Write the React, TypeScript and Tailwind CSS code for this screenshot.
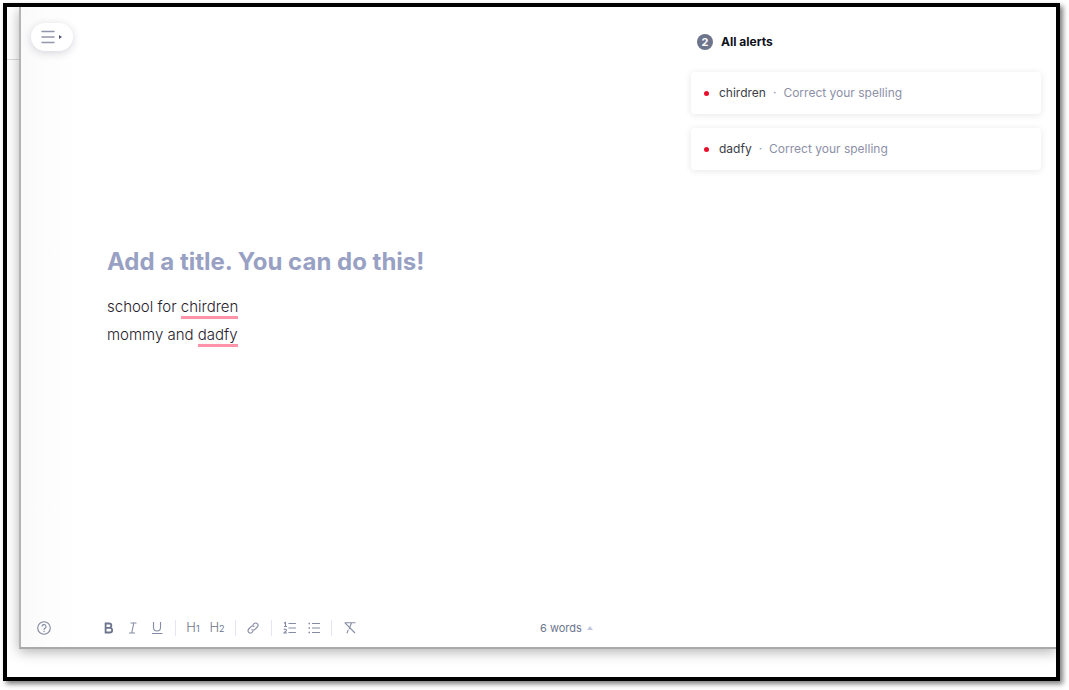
import type { ReactNode } from "react";

const alerts = [
    { word: "chirdren", hint: "Correct your spelling" },
    { word: "dadfy", hint: "Correct your spelling" },
];

function ToolButton({ label, children }: { label: string; children: ReactNode }) {
    return (
        <button
            type="button"
            aria-label={label}
            className="flex h-6 w-6 items-center justify-center text-[#6d758d]"
        >
            {children}
        </button>
    );
}

function Separator() {
    return (
        <div className="flex w-3 justify-center">
            <div className="h-4 w-px bg-[#e4e6f4]" />
        </div>
    );
}

function Icon({ children }: { children: ReactNode }) {
    return (
        <svg
            width="16"
            height="16"
            viewBox="0 0 16 16"
            fill="none"
            stroke="#858ca5"
            strokeWidth="1.1"
            aria-hidden="true"
        >
            {children}
        </svg>
    );
}

function Misspelled({ children }: { children: ReactNode }) {
    return (
        <span className="inline-block h-6 border-b-3 border-[#ff94a8] leading-6">{children}</span>
    );
}

function Toolbar() {
    return (
        <div role="toolbar" aria-label="Formatting" className="flex items-center">
            <ToolButton label="Bold">
                <svg width="16" height="16" viewBox="0 0 16 16" fill="none" stroke="#6d758d" strokeWidth="1.8" aria-hidden="true">
                    <path d="M4.6 3.5h3.6a2.1 2.1 0 0 1 0 4.3H4.6zM4.6 7.8h4.2a2.35 2.35 0 0 1 0 4.7H4.6z" />
                </svg>
            </ToolButton>
            <ToolButton label="Italic">
                <Icon>
                    <path d="M5.5 3h6M4 13h6M8.8 3 6.7 13" />
                </Icon>
            </ToolButton>
            <ToolButton label="Underline">
                <Icon>
                    <path d="M4.5 2v5.5a3.5 3.5 0 0 0 7 0V2M3 13.5h10.5" />
                </Icon>
            </ToolButton>
            <Separator />
            <ToolButton label="Heading 1">
                <span className="text-[13px] font-light text-[#6d758d]">H</span>
                <span className="pt-0.5 text-[9px] text-[#6d758d]">1</span>
            </ToolButton>
            <ToolButton label="Heading 2">
                <span className="text-[13px] font-light text-[#6d758d]">H</span>
                <span className="pt-0.5 text-[9px] text-[#6d758d]">2</span>
            </ToolButton>
            <Separator />
            <ToolButton label="Link">
                <Icon>
                    <path d="M6.6 9.4a2.3 2.3 0 0 0 3.3 0l2.4-2.4a2.33 2.33 0 0 0-3.3-3.3L7.8 4.9" />
                    <path d="M9.4 6.6a2.3 2.3 0 0 0-3.3 0L3.7 9a2.33 2.33 0 0 0 3.3 3.3l1.2-1.2" />
                </Icon>
            </ToolButton>
            <Separator />
            <ToolButton label="Numbered list">
                <Icon>
                    <path d="M7.5 3.5H15M7.5 8H15M7.5 12.5H15" />
                    <path d="M3 3.3 4.5 2.5v4M3 6.5h3M3 9.8c.5-1 2.5-.8 2.4.4 0 .9-1.5 1.6-2.4 2.8h3" />
                </Icon>
            </ToolButton>
            <ToolButton label="Bulleted list">
                <Icon>
                    <path d="M7 3.5h8M7 8h8M7 12.5h8" />
                    <path d="M3.5 3.5H5M3.5 8H5M3.5 12.5H5" strokeWidth="1.5" />
                </Icon>
            </ToolButton>
            <Separator />
            <ToolButton label="Clear formatting">
                <Icon>
                    <path d="M3.5 2.8h11M10.5 2.8 8.200 9M7.3 9.6 6 13.2M4.200 3.2l9.8 9.8" />
                </Icon>
            </ToolButton>
        </div>
    );
}

function AlertsPanel() {
    return (
        <aside className="mr-[15px] w-[350px] shrink-0 pt-6">
            <h2 className="flex h-[22px] items-center gap-2 pl-1.5 text-xs font-bold text-[#0e101a]">
                <span className="flex h-4 w-4 items-center justify-center rounded-full bg-[#6d758d] text-[11px] text-white">
                    2
                </span>
                All alerts
            </h2>
            <ul className="mt-[19px] flex flex-col gap-3.5">
                {alerts.map((alert) => (
                    <li key={alert.word}>
                        <button
                            type="button"
                            className="flex h-[42px] w-full items-center rounded bg-white pl-[13px] text-xs shadow-[0_1px_7px_rgba(30,35,60,0.11)]"
                        >
                            <span className="h-[5px] w-[5px] rounded-full bg-[#e8112d]" />
                            <span className="ml-2.5 text-[#3a3c47]">{alert.word}</span>
                            <span className="mx-[7px] text-[#8d94ab]">·</span>
                            <span className="text-[#8d90a8]">{alert.hint}</span>
                        </button>
                    </li>
                ))}
            </ul>
        </aside>
    );
}

export default function App() {
    return (
        <div className="flex min-h-screen bg-white pt-[3px] pr-[9px] pb-[9px] pl-[3px] font-['Inter',sans-serif]">
            <div className="flex flex-1 overflow-hidden border-4 border-black bg-white pb-7 shadow-[3px_3px_5px_rgba(0,0,0,0.5)]">
                {/* Strip of the window behind */}
                <div className="w-3 shrink-0">
                    <div className="h-[53px] border-b border-[#dcdcdc]" />
                </div>

                <div className="flex flex-1 flex-col border-b-2 border-l-2 border-b-[#a8aaa9] border-l-[#b4b4b4] bg-linear-to-r from-[#fafafa] via-white via-5% to-white shadow-[0_3px_12px_rgba(0,0,0,0.3)]">
                    <div className="flex flex-1">
                        <main className="flex-1 pl-2.5">
                            <button
                                type="button"
                                aria-label="Open menu"
                                className="mt-4 flex h-7 w-[42px] items-center justify-center rounded-full bg-white shadow-[0_2px_8px_rgba(30,35,70,0.18)]"
                            >
                                <svg width="22" height="14" viewBox="0 0 22 14" aria-hidden="true">
                                    <path d="M1 1.5h12M1 7h12M1 12.5h12" stroke="#9297aa" strokeWidth="1.5" strokeLinecap="round" />
                                    <path d="M18 5v4l3-2z" fill="#4d556f" />
                                </svg>
                            </button>

                            <div className="mt-[190px] pl-[76px]">
                                <input
                                    aria-label="Title"
                                    placeholder="Add a title. You can do this!"
                                    className="block h-10 w-full text-2xl font-bold outline-none placeholder:text-[#98a1c3]"
                                />
                                <div className="mt-3 text-[15px] leading-7 font-light text-[#1f212b]">
                                    <p>
                                        school for <Misspelled>chirdren</Misspelled>
                                    </p>
                                    <p>
                                        mommy and <Misspelled>dadfy</Misspelled>
                                    </p>
                                </div>
                            </div>
                        </main>
                        <AlertsPanel />
                    </div>

                    <footer className="flex h-[38px] items-center pl-[11px]">
                        <button type="button" aria-label="Help" className="mr-[41px] flex h-6 w-6 items-center justify-center">
                            <svg width="14" height="14" viewBox="0 0 14 14" fill="none" stroke="#7e869f" strokeWidth="1.1" aria-hidden="true">
                                <circle cx="7" cy="7" r="6.3" />
                                <path d="M5 5.6a2 2 0 1 1 3 1.7c-.7.4-1 .7-1 1.4M7 9.7v1.2" />
                            </svg>
                        </button>
                        <Toolbar />
                        <button type="button" className="ml-[179px] flex items-center gap-1 text-[11px] text-[#6d758d]">
                            6 words
                            <svg width="8" height="6" viewBox="0 0 8 6" aria-hidden="true">
                                <path d="M1 5h6L4 1z" fill="#c3c7e0" />
                            </svg>
                        </button>
                    </footer>
                </div>
            </div>
        </div>
    );
}
